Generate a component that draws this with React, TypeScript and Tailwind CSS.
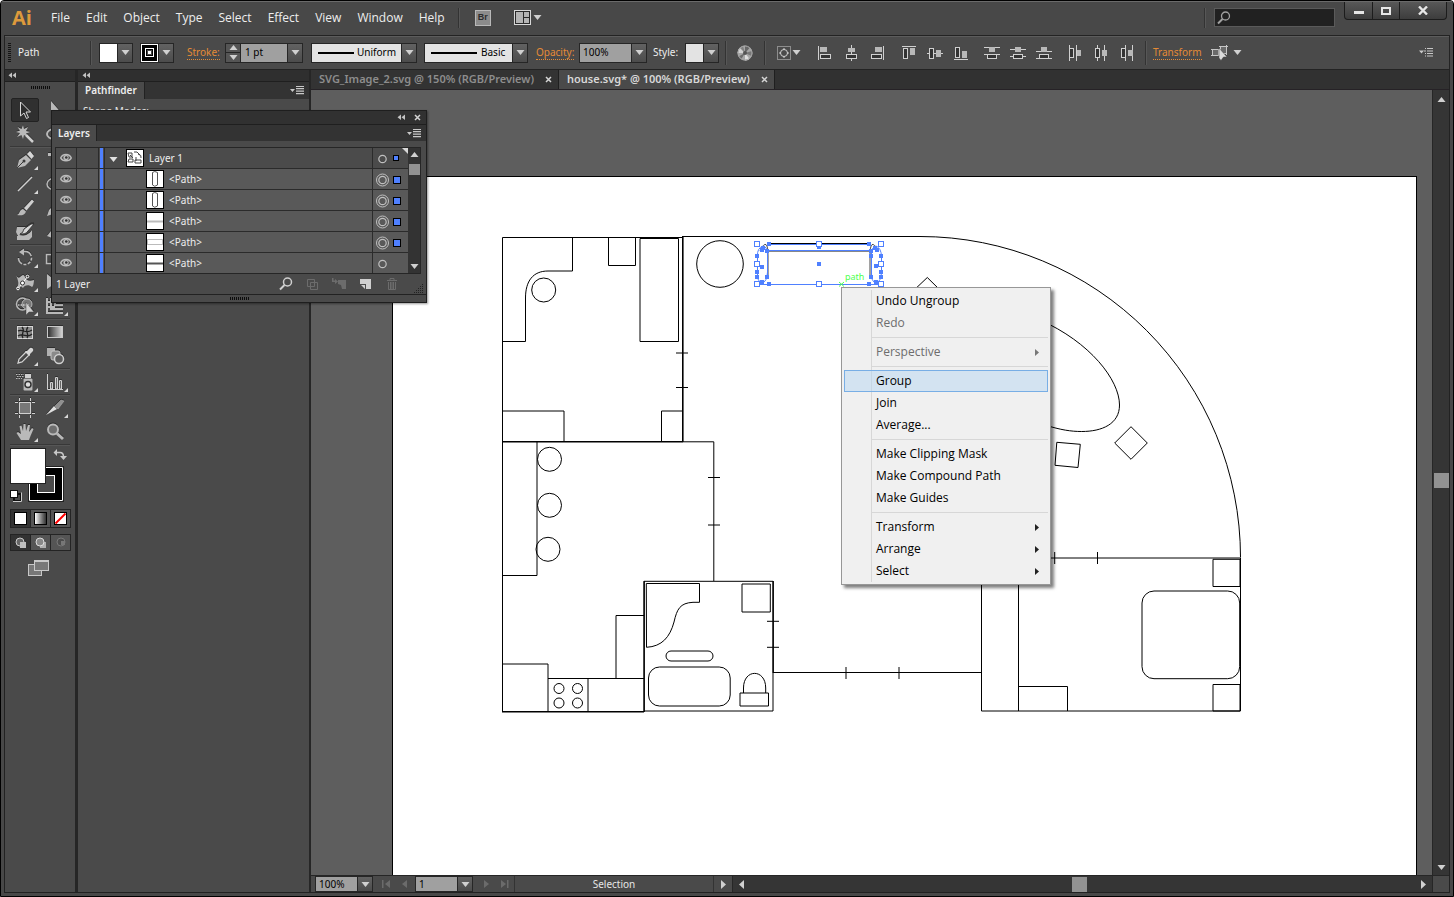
import React from "react";

const FONT = "font-['Noto_Sans',sans-serif]";
const MENU_FONT = "font-['Open_Sans',sans-serif]";

/* ---------- small shared pieces ---------- */

function Tri({ dir = "down", className = "fill-[#d0d0d0]" }: { dir?: "down" | "up" | "left" | "right"; className?: string }) {
  const d = {
    down: "M0.5 2H8.5L4.5 7Z",
    up: "M0.5 7H8.5L4.5 2Z",
    left: "M7 0V9L2 4.5Z",
    right: "M2 0V9L7 4.5Z",
  }[dir];
  return (
    <svg width="9" height="9" viewBox="0 0 9 9" className={`shrink-0 ${className}`}>
      <path d={d} />
    </svg>
  );
}

function VRule({ className = "h-6" }: { className?: string }) {
  return <div className={`w-[2px] shrink-0 border-l border-[#333] bg-[#575757] ${className}`} />;
}

function Grip({ count, vertical = false }: { count: number; vertical?: boolean }) {
  const items = Array.from({ length: count });
  return (
    <div className={vertical ? "flex w-[3px] flex-col gap-px" : "flex h-[3px] gap-px"}>
      {items.map((_, i) => (
        <span key={i} className={vertical ? "h-px w-[3px] bg-[#151515]" : "h-[3px] w-px bg-[#0c0c0c]"} />
      ))}
    </div>
  );
}

function Collapse() {
  return (
    <svg width="8" height="7" viewBox="0 0 8 7" className="fill-[#c4c4c4]">
      <path d="M4 0.5V6L0.5 3.2ZM8 0.5V6L4.5 3.2Z" />
    </svg>
  );
}

function CloseX() {
  return (
    <svg width="7" height="7" viewBox="0 0 7 7" stroke="#d4d4d4" strokeWidth="1.5">
      <path d="M1 1L6 6M6 1L1 6" />
    </svg>
  );
}

function PanelMenu() {
  return (
    <svg width="15" height="9" viewBox="0 0 15 9" fill="#c8c8c8">
      <path d="M0 3H5L2.5 6ZM6 0H14V1H6ZM6 2H14V3.2H6ZM6 4.6H14V5.8H6ZM6 7H14V8.2H6Z" />
    </svg>
  );
}

function DropButton({ label }: { label: string }) {
  return (
    <button aria-label={label} className="flex h-full w-[15px] items-center justify-center border-l border-[#262626] bg-linear-to-b from-[#626262] to-[#4c4c4c]">
      <Tri />
    </button>
  );
}

function Combo({ label, value, options, className, children, field }: { label: string; value: string; options: string[]; className: string; field: string; children?: React.ReactNode }) {
  return (
    <div className={`relative flex border border-[#262626] ${className}`}>
      <select aria-label={label} defaultValue={value} className={`h-full w-full appearance-none text-black outline-none ${field}`}>
        {options.map((o) => (
          <option key={o}>{o}</option>
        ))}
      </select>
      {children}
      <span className="pointer-events-none absolute inset-y-0 right-0 flex w-[15px] items-center justify-center border-l border-[#262626] bg-linear-to-b from-[#626262] to-[#4c4c4c]">
        <Tri />
      </span>
    </div>
  );
}

function OrangeLink({ children }: { children: string }) {
  return (
    <a href="#" className="border-b border-dotted border-[#e58a36] text-[10px] leading-3 text-[#e58a36]">
      {children}
    </a>
  );
}

/* ---------- title bar ---------- */

const MENUS = ["File", "Edit", "Object", "Type", "Select", "Effect", "View", "Window", "Help"];

function TitleBar() {
  return (
    <header className="flex h-[34px] shrink-0 items-center border-t border-[#6a6a6a] bg-[#484848] pb-[2px] pl-[9px]">
      <span className="w-[34px] pl-[2px] font-['Open_Sans',sans-serif] text-[20px] leading-6 font-bold text-[#dd9a3c]">Ai</span>
      <nav className={`flex gap-[2px] ${MENU_FONT} text-[12px] text-[#eeeeee]`}>
        {MENUS.map((m) => (
          <button key={m} className="px-[7px]">
            {m}
          </button>
        ))}
      </nav>
      <VRule className="ml-[6px] h-5" />
      <button className="ml-[15px] flex h-4 w-4 items-center justify-center border border-[#b9b9b9] bg-[#8c8c8c] font-['Liberation_Sans',sans-serif] text-[9px] font-bold text-[#2c2c2c]">Br</button>
      <button aria-label="Arrange documents" className="ml-[23px] flex items-center gap-[2px]">
        <svg width="17" height="15" viewBox="0 0 17 15">
          <rect x="0.5" y="0.5" width="16" height="14" fill="#2a2a2a" stroke="#d8d8d8" />
          <path d="M2 2H9V13H2ZM10 2H15V7H10ZM10 8H15V13H10Z" fill="#b4b4b4" />
        </svg>
        <Tri />
      </button>
      <div className="flex-1" />
      <VRule className="h-5" />
      <label className="ml-2 flex h-[19px] w-[121px] items-center border border-[#5a5a5a] bg-[#212121] px-[2px]">
        <svg width="14" height="14" viewBox="0 0 14 14" fill="none" stroke="#a0a0a0" className="shrink-0">
          <circle cx="8.5" cy="5" r="4" strokeWidth="1.3" />
          <path d="M5.5 8L1 12.5" strokeWidth="2" />
        </svg>
        <input aria-label="Search" className="w-full min-w-0 bg-transparent text-[11px] text-white outline-none" />
      </label>
      <div className="mr-[6px] ml-[9px] flex h-[18px] self-start rounded-b border border-t-0 border-[#1c1c1c] bg-linear-to-b from-[#585858] to-[#3d3d3d]">
        <button aria-label="Minimize" className="flex w-[28px] items-center justify-center border-r border-[#1c1c1c]">
          <span className="mt-1 h-[3px] w-[10px] bg-[#e6e6e6]" />
        </button>
        <button aria-label="Maximize" className="flex w-[27px] items-center justify-center border-r border-[#1c1c1c]">
          <span className="h-2 w-[10px] border-2 border-[#e6e6e6]" />
        </button>
        <button aria-label="Close" className="flex w-[46px] items-center justify-center">
          <svg width="10" height="9" viewBox="0 0 10 9" stroke="#e6e6e6" strokeWidth="2.4">
            <path d="M1 0.5L9 8.5M9 0.5L1 8.5" />
          </svg>
        </button>
      </div>
    </header>
  );
}

/* ---------- control bar ---------- */

const L = "#d0d0d0";
const bar = { fill: "#b8b8b8" };
const box = { fill: "#333", stroke: "#d0d0d0" };

const ALIGN_ICONS: { name: string; gap: string; art: React.ReactNode }[] = [
  { name: "Align left", gap: "", art: <><path d="M1.5 1V15" stroke={L} /><rect x="3" y="2" width="7" height="5" {...bar} /><rect x="3.5" y="9.5" width="10" height="4" {...box} /></> },
  { name: "Align centre", gap: "ml-[10px]", art: <><path d="M8.5 0V16" stroke={L} /><rect x="5" y="3" width="7" height="4" {...bar} /><rect x="3.5" y="9.5" width="10" height="4" {...box} /></> },
  { name: "Align right", gap: "ml-[10px]", art: <><path d="M14.5 1V15" stroke={L} /><rect x="6" y="2" width="7" height="5" {...bar} /><rect x="2.5" y="9.5" width="10" height="4" {...box} /></> },
  { name: "Align top", gap: "ml-4", art: <><path d="M1 1.5H15" stroke={L} /><rect x="2.5" y="3.5" width="4" height="10" {...box} /><rect x="9" y="3" width="5" height="7" {...bar} /></> },
  { name: "Align middle", gap: "ml-[10px]", art: <><path d="M0 8.5H16" stroke={L} /><rect x="2.5" y="3.5" width="4" height="10" {...box} /><rect x="9" y="5" width="5" height="7" {...bar} /></> },
  { name: "Align bottom", gap: "ml-[10px]", art: <><path d="M1 14.5H15" stroke={L} /><rect x="2.5" y="2.5" width="4" height="10" {...box} /><rect x="9" y="6" width="5" height="7" {...bar} /></> },
  { name: "Distribute top", gap: "ml-[15px]", art: <><path d="M0 2.5H16M0 9.5H16" stroke={L} /><rect x="5" y="2" width="6" height="5" {...bar} /><rect x="3.5" y="9.5" width="9" height="4" {...box} /></> },
  { name: "Distribute middle", gap: "ml-[10px]", art: <><path d="M0 4.5H16M0 11.5H16" stroke={L} /><rect x="5" y="2" width="6" height="5" {...bar} /><rect x="3.5" y="9.5" width="9" height="4" {...box} /></> },
  { name: "Distribute bottom", gap: "ml-[10px]", art: <><path d="M0 6.5H16M0 13.5H16" stroke={L} /><rect x="5" y="2" width="6" height="5" {...bar} /><rect x="3.5" y="9.5" width="9" height="4" {...box} /></> },
  { name: "Distribute left", gap: "ml-[15px]", art: <><path d="M2.5 0V16M9.5 0V16" stroke={L} /><rect x="2.5" y="3.5" width="4" height="9" {...box} /><rect x="10" y="5" width="4" height="6" {...bar} /></> },
  { name: "Distribute centre", gap: "ml-[10px]", art: <><path d="M4.5 0V16M11.5 0V16" stroke={L} /><rect x="2.5" y="3.5" width="4" height="9" {...box} /><rect x="9" y="5" width="5" height="6" {...bar} /></> },
  { name: "Distribute right", gap: "ml-[10px]", art: <><path d="M6.5 0V16M13.5 0V16" stroke={L} /><rect x="2.5" y="3.5" width="4" height="9" {...box} /><rect x="9" y="5" width="5" height="6" {...bar} /></> },
];

function ControlBar() {
  return (
    <div className="mx-[3px] flex h-[35px] shrink-0 items-center border border-[#232323] bg-[#4a4a4a] pl-[3px] text-[10px] text-[#eeeeee] shadow-[inset_0_1px_0_#5c5c5c]">
      <Grip count={10} vertical />
      <span className="ml-[7px] w-[72px]">Path</span>
      <VRule />
      <div className="ml-[7px] flex h-5 border border-[#262626]">
        <button aria-label="Fill" className="w-[17px] bg-white" />
        <DropButton label="Fill options" />
      </div>
      <div className="ml-[7px] flex h-5 border border-[#262626]">
        <button aria-label="Stroke colour" className="flex w-[17px] items-center justify-center border border-white bg-black">
          <span className="h-[9px] w-[9px] border border-white bg-black p-px">
            <span className="block h-full w-full border border-[#4a4a4a] bg-white" />
          </span>
        </button>
        <DropButton label="Stroke options" />
      </div>
      <div className="ml-[13px] w-[38px]">
        <OrangeLink>Stroke:</OrangeLink>
      </div>
      <div className="flex h-5 border border-[#262626]">
        <div className="flex w-[14px] flex-col bg-[#555]">
          <button aria-label="Increase stroke" className="flex flex-1 items-center justify-center overflow-hidden border-b border-[#262626]"><Tri dir="up" /></button>
          <button aria-label="Decrease stroke" className="flex flex-1 items-center justify-center overflow-hidden"><Tri /></button>
        </div>
        <input aria-label="Stroke weight" defaultValue="1 pt" className="w-[47px] border-l border-[#262626] bg-[#a0a0a0] pl-1 text-black outline-none" />
        <DropButton label="Stroke weight presets" />
      </div>
      <Combo label="Width profile" value="Uniform" options={["Uniform", "Tapered"]} className="ml-2 h-5 w-[106px]" field="bg-[#e3e3e3] pl-[45px]">
        <span className="pointer-events-none absolute top-2 left-[6px] h-[2px] w-[36px] bg-black" />
      </Combo>
      <Combo label="Brush" value="Basic" options={["Basic", "Charcoal"]} className="ml-[7px] h-5 w-[104px]" field="bg-[#e3e3e3] pl-[56px]">
        <span className="pointer-events-none absolute top-2 left-[6px] h-[2px] w-[46px] bg-black" />
      </Combo>
      <div className="ml-2 w-[43px]">
        <OrangeLink>Opacity:</OrangeLink>
      </div>
      <Combo label="Opacity" value="100%" options={["100%", "75%", "50%"]} className="h-5 w-[68px]" field="bg-[#a0a0a0] pl-[3px]" />
      <span className="ml-[6px] w-8">Style:</span>
      <div className="flex h-5 border border-[#262626]">
        <button aria-label="Graphic style" className="w-[17px] bg-[#e3e3e3]" />
        <DropButton label="Graphic style options" />
      </div>
      <VRule className="ml-[6px] h-6" />
      <button aria-label="Recolor artwork" className="ml-[10px]">
        <svg width="16" height="16" viewBox="0 0 16 16">
          <circle cx="8" cy="8" r="7.5" fill="#a6a6a6" />
          <path d="M8 8L8 0.5A7.5 7.5 0 0 1 13 2.5Z" fill="#666" />
          <path d="M8 8L15 6A7.5 7.5 0 0 1 14.5 11Z" fill="#777" />
          <path d="M8 8L12.5 14A7.5 7.5 0 0 1 8 15.5Z" fill="#dedede" />
          <path d="M8 8L4 14.5A7.5 7.5 0 0 1 1.5 11.5Z" fill="#6c6c6c" />
          <path d="M8 8L0.500 8A7.5 7.5 0 0 1 2.5 3Z" fill="#d2d2d2" />
          <path d="M8 8L3 2.5A7.5 7.5 0 0 1 6 1Z" fill="#808080" />
          <circle cx="8" cy="8" r="7" fill="none" stroke="#a6a6a6" />
          <circle cx="8" cy="8" r="2" fill="#555" />
        </svg>
      </button>
      <VRule className="ml-[11px] h-6" />
      <button aria-label="Align to" className="ml-[11px] flex w-[30px] items-center gap-px">
        <svg width="14" height="14" viewBox="0 0 14 14" fill="none" stroke="#d0d0d0">
          <rect x="0.5" y="0.5" width="13" height="13" strokeDasharray="1 1" />
          <circle cx="7" cy="7" r="3.5" />
          <path d="M7 2V4M7 10V12M2 7H4M10 7H12" />
        </svg>
        <Tri />
      </button>
      <div className="ml-[10px] flex">
        {ALIGN_ICONS.map((a) => (
          <button key={a.name} aria-label={a.name} className={a.gap}>
            <svg width="16" height="16" viewBox="0 0 16 16">{a.art}</svg>
          </button>
        ))}
      </div>
      <VRule className="ml-[10px] h-6" />
      <div className="ml-[6px] w-[58px]">
        <OrangeLink>Transform</OrangeLink>
      </div>
      <button aria-label="Isolate" className="flex items-center gap-[5px]">
        <svg width="17" height="16" viewBox="0 0 17 16">
          <path d="M1.5 4.5H7.5V10.500H1.5ZM9.5 1.5H15.5V8.5H9.5ZM0 4.5H9M0 10.5H8M8 1.5H17M15.500 0V10" fill="#6a6a6a" stroke="#c6c6c6" />
          <path d="M8 3L16 12L12.5 12L10 15.5L8 13Z" fill="#dcdcdc" stroke="#444" strokeWidth="0.5" />
        </svg>
        <Tri />
      </button>
      <div className="flex-1" />
      <button aria-label="Control panel menu" className="mr-4">
        <svg width="14" height="9" viewBox="0 0 14 9" fill="#c8c8c8">
          <path d="M0 2.5H5L2.5 5.5ZM6 0H7V1H6ZM8 0H14V1H8ZM5 2.500H7V3.500H5ZM8 2.500H14V3.500H8ZM6 5H7V6H6ZM8 5H14V6H8ZM6 7.500H7V8.500H6ZM8 7.500H14V8.500H8Z" />
        </svg>
      </button>
    </div>
  );
}

/* ---------- tools ---------- */

const G = "#b9b9b9";

const TOOLS: Record<string, React.ReactNode> = {
  Selection: <path d="M5.5 2V16L9 13L11.5 18.5L13.5 17.5L11 12H15.5Z" fill="#2c2c2c" stroke="#d8d8d8" />,
  "Direct Selection": <path d="M6 1V16L9 13L11.5 18.5L13.5 17.5L11 12H15.5Z" fill={G} />,
  "Magic Wand": <><path d="M8 1L9 5L13 3L11 7L15 8L11 9.5L13 13L9 11L8 15L6.5 11L2 13L5 9L1 8L5 6.5L2.5 3L6.5 5Z" fill={G} /><path d="M11 11L18 18" stroke="#cfcfcf" strokeWidth="2.5" /></>,
  Lasso: <ellipse cx="9" cy="10" rx="7" ry="5" fill="none" stroke={G} strokeWidth="2" />,
  Pen: <><path d="M2 18L4 10L11 5L16 10L10 16Z" fill={G} /><path d="M12 4L15 1L19 6L16.5 9Z" fill="#d6d6d6" /><path d="M2 18L8 12" stroke="#3b3b3b" /><circle cx="9" cy="11" r="1.500" fill="#3b3b3b" /></>,
  Type: <path d="M3 3H17V6H11.5V17H8.5V6H3Z" fill={G} />,
  "Line Segment": <path d="M3 17L17 3" stroke="#d0d0d0" strokeWidth="1.5" />,
  Ellipse: <ellipse cx="10" cy="10" rx="8" ry="6" fill="none" stroke={G} strokeWidth="1.5" />,
  Paintbrush: <><path d="M9 10L17 1.500L19 3.500L11.500 12.500Z" fill="#d0d0d0" /><path d="M2 17C5 16 4 12 8 11L11 13.5C10 17 6 18 2 17Z" fill={G} /></>,
  Pencil: <path d="M2 18L4 12L14 2L18 6L8 16Z" fill={G} />,
  "Blob Brush": <><path d="M2 5H11L9 8C8 11 6 12 4 13C8 14 13 14 17 8V15L14 18H2V14H3L1 10Z" fill={G} /><path d="M9 7L16 2L19 2L13 9C11 12 8 12 5 12C8 11 8 9 9 7Z" fill="#d8d8d8" stroke="#3a3a3a" /></>,
  Eraser: <path d="M2 14L10 4L17 8L10 17Z" fill={G} />,
  Rotate: <><path d="M7 3.5H10A6.500 6.500 0 1 1 3.500 10" fill="none" stroke={G} strokeWidth="1.6" strokeDasharray="11 1.5 3 1.5 3 1.5 3 1.5" /><path d="M4 4L9 0.500V7.500Z" fill={G} /></>,
  Scale: <path d="M1.5 6.5H10.5V15.5H1.5ZM6 1H18V13" fill="none" stroke={G} strokeWidth="1.5" />,
  Width: <><path d="M1 3C4 9 6 3 8 3C11 3 9 11 19 8C19 11 18 15 17 15C14 12 9 13 8 16C5 12 4 16 1 16C5 13 3 8 1 3Z" fill={G} /><path d="M3 17L13 4" stroke="#fff" /><circle cx="3" cy="16.500" r="1.300" fill="#333" stroke="#fff" /><circle cx="12.500" cy="4.500" r="1.300" fill="#333" stroke="#fff" /><circle cx="7.5" cy="11" r="2" fill="#fff" stroke="#333" /></>,
  "Free Transform": <path d="M2 2L12 10L2 17ZM14 4H18V8" fill={G} />,
  "Shape Builder": <><circle cx="7.500" cy="8" r="6" fill="none" stroke={G} strokeWidth="1.5" /><circle cx="12" cy="8" r="5" fill="#777" stroke={G} /><path d="M3 9H14" stroke="#fff" strokeDasharray="1.5 1" /><path d="M11 6V19L14 16H19Z" fill="#cfcfcf" stroke="#444" strokeWidth="0.5" /></>,
  "Perspective Grid": <path d="M2 2V17H18M6 2V13H18M10 2V9H18M14 3V6H18M2 6H6M2 11H10" fill="none" stroke={G} strokeWidth="2" />,
  Mesh: <><rect x="2.5" y="4.5" width="15" height="12" fill="#8d8d8d" stroke="#d6d6d6" /><path d="M3 9C8 6 10 13 17 8M3 14C8 10 12 17 17 12M7 5C11 9 5 12 8 16M13 5C9 9 15 12 12 16" fill="none" stroke="#222" strokeWidth="1.3" /></>,
  Gradient: <><defs><linearGradient id="tool-gradient"><stop stopColor="#2b2b2b" /><stop offset="1" stopColor="#d8d8d8" /></linearGradient></defs><rect x="2.5" y="4.5" width="15" height="11" fill="url(#tool-gradient)" stroke="#c9c9c9" /></>,
  Eyedropper: <><path d="M3 17L4 13L11 6L14 9L7 16Z" fill="none" stroke="#d0d0d0" strokeWidth="1.3" /><path d="M10 5L12 5L15 2C17 1 19 3 18 5L15 8V10Z" fill="#d6d6d6" /></>,
  Blend: <><rect x="2" y="2" width="8" height="8" fill="#b0b0b0" /><rect x="6" y="5" width="9" height="9" rx="2" fill="#8a8a8a" stroke="#c4c4c4" /><circle cx="14" cy="13" r="4.5" fill="#5c5c5c" stroke="#d0d0d0" strokeWidth="1.5" /></>,
  "Symbol Sprayer": <><rect x="8.5" y="6.5" width="9" height="12" rx="1" fill={G} /><rect x="10" y="2" width="6" height="4" fill="#d0d0d0" /><circle cx="13" cy="12.5" r="3" fill="#e0e0e0" stroke="#333" strokeWidth="1.5" /><path d="M1 2.500H9M2 4.500H9M1 6.500H7" stroke={G} strokeDasharray="1.5 1" /></>,
  Graph: <><path d="M2.5 2V17.5H18" fill="none" stroke="#d0d0d0" /><path d="M5.500 10.500H7.5V17H5.500ZM10.500 5.500H12.500V17H10.500ZM14.500 8.500H16.5V17H14.500Z" fill="#666" stroke="#d0d0d0" /></>,
  Artboard: <><rect x="4.5" y="4.5" width="11" height="11" fill="#777" stroke="#d0d0d0" /><path d="M4.5 0V3M15.5 0V3M4.5 17V20M15.5 17V20M0 4.5H3M0 15.5H3M17 4.5H20M17 15.5H20" stroke="#d0d0d0" /></>,
  Slice: <><path d="M1 17L9 8L12 11Z" fill="#e0e0e0" /><path d="M10 8L16 2L19 3L13 11Z" fill="#8f8f8f" stroke={G} strokeWidth="0.5" /></>,
  Hand: <path d="M6 18L1.500 11L3 10L6 12L4.500 4L6.500 3.500L8 9L8.500 2H10.500L11 9L13 3H15L14 10L17 6L18.500 7L15.500 14L14 18Z" fill={G} />,
  Zoom: <><circle cx="8" cy="7.5" r="5" fill="#6e6e6e" stroke={G} strokeWidth="2" /><path d="M12 11.5L18 17" stroke={G} strokeWidth="3" /></>,
};

const TOOL_GROUPS: [string, boolean][][] = [
  [["Selection", false], ["Direct Selection", false], ["Magic Wand", false], ["Lasso", false]],
  [["Pen", true], ["Type", true], ["Line Segment", true], ["Ellipse", true], ["Paintbrush", false], ["Pencil", false], ["Blob Brush", false], ["Eraser", false]],
  [["Rotate", true], ["Scale", true], ["Width", true], ["Free Transform", false], ["Shape Builder", true], ["Perspective Grid", true]],
  [["Mesh", false], ["Gradient", false], ["Eyedropper", true], ["Blend", false]],
  [["Symbol Sprayer", true], ["Graph", true]],
  [["Artboard", false], ["Slice", true], ["Hand", true], ["Zoom", false]],
];

function ToolPanel() {
  return (
    <aside className="flex w-[72px] shrink-0 flex-col border-r-2 border-[#262626] bg-[#4a4a4a]">
      <div className="flex h-3 shrink-0 items-center border-b border-[#1f1f1f] bg-[#2f2f2f] pl-[3px]">
        <Collapse />
      </div>
      <div className="flex h-4 shrink-0 justify-center pt-1">
        <Grip count={10} />
      </div>
      <div className="pl-[5px]">
        {TOOL_GROUPS.map((group, i) => (
          <div key={i}>
            <div className="grid w-[60px] grid-cols-2">
              {group.map(([name, more]) => (
                <button
                  key={name}
                  aria-label={name}
                  className={`relative flex h-6 items-center justify-center ${name === "Selection" ? "mx-px rounded-xs border border-[#222] bg-[#303030]" : ""}`}
                >
                  <svg width="20" height="20" viewBox="0 0 20 20" className="drop-shadow-[0_-1px_0_#2e2e2e]">{TOOLS[name]}</svg>
                  {more && (
                    <svg width="4" height="4" viewBox="0 0 4 4" className="absolute right-[2px] bottom-[2px] fill-[#d8d8d8]">
                      <path d="M4 0V4H0Z" />
                    </svg>
                  )}
                </button>
              ))}
            </div>
            <div className="h-[2px] w-[60px] border-t border-[#383838] bg-[#565656]" />
          </div>
        ))}
      </div>
      <button aria-label="Fill and stroke" className="ml-[4px] w-[60px]">
        <svg width="60" height="58" viewBox="0 0 60 58">
          <rect x="19" y="20" width="36" height="36" fill="#222" />
          <path d="M20.5 21.5H53.5V54.5H20.5Z" fill="#000" stroke="#fff" />
          <rect x="28.5" y="29.5" width="17" height="17" fill="#4a4a4a" stroke="#fff" />
          <rect x="1.5" y="2.5" width="35" height="35" fill="#fff" stroke="#222" />
          <path d="M47 6.5H51C53.500 6.5 54.500 8 54.500 11" fill="none" stroke="#c8c8c8" strokeWidth="1.5" />
          <path d="M48 3V10L44.500 6.500ZM51 10H58L54.500 14Z" fill="#c8c8c8" />
          <rect x="5" y="48" width="7" height="7" fill="#4a4a4a" stroke="#111" strokeWidth="2" />
          <path d="M12.500 46.500V55.500H4" fill="none" stroke="#ccc" />
          <rect x="1.5" y="44.5" width="7" height="7" fill="#fff" stroke="#111" />
        </svg>
      </button>
      <div className="mt-[5px] ml-[5px] flex h-[19px] w-[61px] shrink-0 divide-x divide-[#242424] border border-[#242424] bg-[#555]">
        <button aria-label="Color" className="flex flex-1 items-center justify-center bg-[#333]"><span className="h-[13px] w-[13px] border border-black bg-white" /></button>
        <button aria-label="Gradient fill" className="flex flex-1 items-center justify-center"><span className="h-[13px] w-[13px] border border-black bg-linear-to-r from-white to-[#333]" /></button>
        <button aria-label="None" className="flex flex-1 items-center justify-center">
          <svg width="13" height="13" viewBox="0 0 13 13"><rect x="0.5" y="0.5" width="12" height="12" fill="#fff" stroke="#000" /><path d="M1.5 11.5L11.5 1.5" stroke="#f00" strokeWidth="2" /></svg>
        </button>
      </div>
      <div className="mt-[6px] ml-[5px] flex h-[17px] w-[61px] shrink-0 divide-x divide-[#242424] border border-[#242424] bg-[#555]">
        <button aria-label="Draw normal" className="flex flex-1 items-center justify-center bg-[#333]">
          <svg width="12" height="12" viewBox="0 0 12 12"><circle cx="5" cy="5" r="4" fill="#666" stroke="#ccc" /><rect x="5" y="5" width="6" height="6" fill="#c0c0c0" /></svg>
        </button>
        <button aria-label="Draw behind" className="flex flex-1 items-center justify-center">
          <svg width="12" height="12" viewBox="0 0 12 12"><rect x="5" y="5" width="6" height="6" fill="#b0b0b0" /><circle cx="5" cy="5" r="4" fill="#888" stroke="#ddd" /></svg>
        </button>
        <button aria-label="Draw inside" className="flex flex-1 items-center justify-center">
          <svg width="12" height="12" viewBox="0 0 12 12"><circle cx="6" cy="5" r="4" fill="#4c4c4c" stroke="#777" /><rect x="6" y="4" width="4" height="4" fill="#777" /></svg>
        </button>
      </div>
      <button aria-label="Screen mode" className="mt-2 ml-[22px] w-[22px]">
        <svg width="22" height="18" viewBox="0 0 22 18"><rect x="1.5" y="5.5" width="13" height="11" fill="#777" stroke="#c8c8c8" /><rect x="7.5" y="1.5" width="14" height="10" fill="#777" stroke="#c8c8c8" /><path d="M8 2.500H21" stroke="#c8c8c8" /></svg>
      </button>
    </aside>
  );
}

function PathfinderPanel() {
  return (
    <aside className="flex w-[234px] shrink-0 flex-col border-r-2 border-l border-[#262626] bg-[#4a4a4a]">
      <div className="flex h-3 shrink-0 items-center border-b border-[#1f1f1f] bg-[#2f2f2f] pl-1">
        <Collapse />
      </div>
      <div className="flex h-[17px] shrink-0 items-center justify-between bg-[#333] pr-1">
        <button className="h-full border-r border-[#222] bg-[#4a4a4a] px-[7px] text-[10px] font-semibold text-[#eeeeee]">Pathfinder</button>
        <button aria-label="Pathfinder menu"><PanelMenu /></button>
      </div>
      <h3 className="pt-[5px] pl-[5px] text-[10px] text-[#e6e6e6]">Shape Modes:</h3>
    </aside>
  );
}

/* ---------- layers panel ---------- */

type Row = { name: string; thumb: React.ReactNode; top?: boolean; selected: boolean };

const tall = <path d="M6.500 2.500Q8.500 0.500 11.500 2.500V15Q8.500 17.500 6.500 15Z" fill="none" stroke="#555" />;
const ROWS: Row[] = [
  { name: "Layer 1", top: true, selected: true, thumb: <path d="M2 4H6V8H3ZM8 3H11L14 6M3 10H7V13H2ZM9 11H15V14H9ZM4 6L7 9M12 5Q16 6 15 9M10 8V12" fill="none" stroke="#444" /> },
  { name: "<Path>", selected: true, thumb: tall },
  { name: "<Path>", selected: true, thumb: tall },
  { name: "<Path>", selected: true, thumb: <path d="M1 9.5H17" stroke="#bbb" strokeWidth="2" /> },
  { name: "<Path>", selected: true, thumb: <rect x="1.5" y="6.5" width="15" height="5" fill="none" stroke="#bbb" /> },
  { name: "<Path>", selected: false, thumb: <path d="M1 9.500H17" stroke="#555" strokeWidth="2" /> },
];

function Eye() {
  return (
    <svg width="12" height="9" viewBox="0 0 12 9">
      <path d="M0.7 5C2.5 0.3 9.5 0.3 11.3 5C9.5 8.7 2.5 8.7 0.7 5Z" fill="#505050" stroke="#bcbcbc" strokeWidth="1.4" />
      <circle cx="6" cy="4.5" r="2.6" fill="#bcbcbc" />
      <circle cx="6.300" cy="4.5" r="1.300" fill="#333" />
    </svg>
  );
}

function LayersPanel() {
  return (
    <section className="absolute top-[109px] left-[50px] z-10 flex w-[376px] flex-col border border-[#1e1e1e] bg-[#4a4a4a] text-[10px] text-[#eeeeee] shadow-[1px_1px_2px_rgba(0,0,0,0.4)]">
      <div className="flex h-[13px] items-center justify-end gap-[9px] bg-[#313131] pr-[5px]">
        <button aria-label="Collapse layers"><Collapse /></button>
        <button aria-label="Close layers"><CloseX /></button>
      </div>
      <div className="flex h-[17px] items-center justify-between border-t border-[#1f1f1f] bg-[#333] pr-1">
        <button className="h-full border-r border-[#222] bg-[#4a4a4a] px-[6px] font-semibold">Layers</button>
        <button aria-label="Layers menu"><PanelMenu /></button>
      </div>
      <div className="mr-[5px] ml-[3px] mt-[6px] flex border border-[#262626] bg-[#2b2b2b]">
        <div className="flex flex-1 flex-col gap-px">
          {ROWS.map((r, i) => (
            <div key={i} className={`flex h-5 gap-px ${r.top ? "[&>*]:bg-[#4b4b4b]" : "[&>*]:bg-[#595959]"}`}>
              <button aria-label="Toggle visibility" className="flex w-5 justify-center pt-[5px]"><Eye /></button>
              <div className="w-[21px]" />
              <div className="w-[5px] px-px"><div className="h-full bg-[#4f80ff]" /></div>
              <div className="flex flex-1 items-center">
                {r.top && <span className="pt-[2px] pl-1"><Tri className="fill-[#e0e0e0]" /></span>}
                <svg width="18" height="18" viewBox="0 0 18 18" className={r.top ? "ml-2" : "ml-[41px]"}>
                  <rect x="0.5" y="0.5" width="17" height="17" fill="#fff" stroke="#000" />
                  {r.thumb}
                </svg>
                <span className="ml-[5px]">{r.name}</span>
              </div>
              <div className="relative flex w-[35px] items-center">
                <svg width="35" height="20" viewBox="0 0 35 20">
                  <circle cx="9.5" cy="11" r="3.700" fill="none" stroke="#c0c0c0" strokeWidth="1.2" />
                  {r.selected && !r.top && <circle cx="9.5" cy="11" r="6" fill="none" stroke="#c0c0c0" />}
                  {r.selected && (r.top ? <rect x="20.5" y="7.5" width="5" height="5" fill="#4f80ff" stroke="#000" /> : <rect x="20.5" y="7.5" width="7" height="7" fill="#4f80ff" stroke="#000" />)}
                  {r.top && <path d="M29 0H35V6Z" fill="#d8d8d8" />}
                </svg>
              </div>
            </div>
          ))}
        </div>
        <div className="flex w-3 flex-col items-center bg-[#333] py-[2px]">
          <Tri dir="up" />
          <div className="mt-[5px] h-[11px] w-[11px] bg-[#929292]" />
          <div className="flex-1" />
          <Tri />
        </div>
      </div>
      <div className="flex h-5 items-center pr-[2px] pl-1">
        <span className="flex-1">1 Layer</span>
        <div className="flex items-center gap-[13px]">
          <button aria-label="Locate object"><svg width="14" height="14" viewBox="0 0 14 14" fill="none" stroke="#d0d0d0"><circle cx="8.5" cy="5" r="4" strokeWidth="1.5" /><path d="M5.5 8L1 12.5" strokeWidth="2" /></svg></button>
          <button aria-label="Clipping mask"><svg width="13" height="12" viewBox="0 0 13 12" fill="none" stroke="#6c6c6c"><path d="M1.5 1.5H8.5V8.5H1.5ZM4.5 4.5H11.5V11.5H4.5Z" /></svg></button>
          <button aria-label="New sublayer"><svg width="15" height="12" viewBox="0 0 15 12" fill="#6c6c6c"><path d="M0 0H1.5V2.5H3V1L6 3.5L3 6V4H0ZM6 2H14V11H10L9 7L6 6Z" /></svg></button>
          <button aria-label="New layer"><svg width="11" height="12" viewBox="0 0 11 12" fill="#cfcfcf"><path d="M0 1H11V11H6V6H0ZM1 7H5V11Z" /></svg></button>
          <button aria-label="Delete layer" className="ml-[2px]"><svg width="12" height="12" viewBox="0 0 12 12" fill="none" stroke="#6c6c6c"><path d="M1 2.500H11M4 2V0.500H8V2M2.500 4V11.500H9.500V4M4.500 4V11M6 4V11M7.500 4V11" /></svg></button>
          <svg width="10" height="10" viewBox="0 0 10 10" className="mt-2 ml-[3px]" stroke="#222" strokeDasharray="1 1"><path d="M8 1.500H10M6 3.500H10M4 5.500H10M2 7.500H10M0 9.500H10" /></svg>
        </div>
      </div>
      <div className="flex h-2 items-center justify-center border-t border-[#222]">
        <Grip count={10} />
      </div>
    </section>
  );
}

/* ---------- artwork ---------- */

const HOLLOW = [[757, 244], [819, 244], [881, 244], [757, 264], [881, 264], [757, 284], [819, 284], [881, 284]];
const SOLID = [
  [769, 244], [869, 244], [819, 247], [819, 264], [767, 251], [871, 251], [763, 248], [875, 248], [762, 250], [877, 250],
  [757, 256], [871, 256], [881, 256], [762, 267], [876, 266], [757, 272], [881, 272], [757, 277], [767, 277], [871, 277], [881, 277],
  [762, 282], [876, 282], [769, 284], [869, 284],
];

function Artwork() {
  return (
    <svg className="h-full w-full">
      <g transform="translate(-311 -90)" fill="none" stroke="#000" strokeWidth="1">
        <rect x="392.5" y="176.5" width="1024" height="768" fill="#fff" />
        {/* bedroom, top left */}
        <path d="M502.5 712V237.5H682M640 238.5H678.5V341.5H640ZM608.5 237.5H635.5V265.5H608.5ZM503 411H564V442M661.5 442V411H682M676 353H688M676 387.5H688" />
        <path d="M572.5 237.5V271H548C533 271 525.5 281 525.5 298V341.5H503" />
        <path d="M682.8 236V442" strokeWidth="1.6" />
        <path d="M502 441.7H683" strokeWidth="1.4" />
        <circle cx="543.7" cy="290" r="12" />
        {/* main hall */}
        <path d="M683 236.5H920A320.5 321 0 0 1 1240.5 557.5" />
        <circle cx="720" cy="264" r="23.3" />
        <path d="M683 441.8H713.8V581M708 477.5H720M708 525H720M773 672.5H981.5M846 667V679M899 667V679" />
        {/* kitchen */}
        <path d="M537 442V575.5H503M503 664H548V712M548 678.5H644M588 678.5V712M616 678.5V615.5H644" />
        <path d="M502 711.7H644" strokeWidth="1.5" />
        <circle cx="549.5" cy="459.3" r="12" />
        <circle cx="549.5" cy="505.3" r="12" />
        <circle cx="548" cy="549.3" r="12" />
        <circle cx="559" cy="688.5" r="5" />
        <circle cx="577.5" cy="688.5" r="5" />
        <circle cx="559" cy="703" r="5" />
        <circle cx="577.5" cy="703" r="5" />
        {/* bathroom */}
        <path d="M644 581.3H773V711H644ZM742 584H770.3V612H742ZM740 693H768.5V706H740ZM767 621.3H779M767 647.3H779" />
        <path d="M644.2 581V712M773.2 581V673" strokeWidth="1.3" />
        <path d="M646.3 583.5H699.5V602.3H693C680 603 677 609 674 622C670 637 662 646.5 646.5 647.3Z" />
        <path d="M743.5 693V688C743.5 668.5 765.7 668.5 765.7 688V693" />
        <rect x="666" y="651" width="47" height="10" rx="5" />
        <rect x="648.5" y="667" width="81.7" height="39" rx="11" />
        {/* bedroom, bottom right */}
        <path d="M981.5 558H1240.5V711H981.5ZM1018.5 558V711M1018.5 686.5H1067.5V711M1054.7 552V564M1097.5 552V564" />
        <path d="M1213 559.3H1240V586.5H1213ZM1213 684.5H1240V711H1213Z" />
        <rect x="1142" y="591" width="97.7" height="87.7" rx="12" />
        {/* dining table and chairs */}
        <path d="M1040 320C1090 342 1119.5 380 1119.5 405C1119.5 424 1102 431.5 1081.7 431.5C1071 431.5 1061 430 1045 425" />
        <path d="M1131 426.7L1147.3 443L1131 459.3L1114.7 443ZM1056.8 442.3L1080.3 444.3L1078 467.5L1055 465.3ZM927.3 277.5L943 293L927 309L911 293Z" />
        {/* selected sofa */}
        <path d="M760 250.5Q768 236 768 256V278M878 250.5Q870 236 870 256V278" stroke="#444" />
        <g stroke="#4f80ff">
          <path d="M757 284.5H881M768 244.5H870M767 250.5H871M767.5 250V277M871.5 250V277" />
          <path d="M757.5 256Q757 248 763 246Q768 247 767.5 256V272Q767 282 762 283Q757 282 757.5 272ZM871.5 256Q871 247 876 246Q881 248 881.5 256V272Q881 282 876 283Q871 282 871.5 272Z" />
        </g>
        <path d="M768 243.5H870" />
        <path d="M768 251.5H870" stroke="#888" />
        {SOLID.map(([x, y]) => (
          <rect key={`${x}-${y}`} x={x - 2} y={y - 2} width="4" height="4" fill="#4f80ff" stroke="none" />
        ))}
        {HOLLOW.map(([x, y]) => (
          <rect key={`${x}-${y}`} x={x - 2.5} y={y - 2.5} width="5" height="5" fill="#fff" stroke="#4f80ff" />
        ))}
        <path d="M839 282L844 286.5M844 282L839 286.5" stroke="#4fff4f" />
        <text x="845" y="280" fill="#4fff4f" stroke="none" className="font-['Noto_Sans',sans-serif] text-[9px]">path</text>
      </g>
    </svg>
  );
}

/* ---------- context menu ---------- */

type Item = { label: string; disabled?: boolean; sub?: boolean; active?: boolean };

const CONTEXT: Item[][] = [
  [{ label: "Undo Ungroup" }, { label: "Redo", disabled: true }],
  [{ label: "Perspective", disabled: true, sub: true }],
  [{ label: "Group", active: true }, { label: "Join" }, { label: "Average..." }],
  [{ label: "Make Clipping Mask" }, { label: "Make Compound Path" }, { label: "Make Guides" }],
  [{ label: "Transform", sub: true }, { label: "Arrange", sub: true }, { label: "Select", sub: true }],
];

function ContextMenu() {
  return (
    <div role="menu" className={`absolute top-[197px] left-[530px] w-[210px] border border-[#979797] bg-[#f0f0f0] p-[2px] ${MENU_FONT} text-[12px] text-black shadow-[3px_3px_3px_rgba(0,0,0,0.5)]`}>
      <div className="bg-[linear-gradient(#d7d7d7,#d7d7d7)] bg-[length:1px_100%] bg-[position:27px_0] bg-no-repeat">
        {CONTEXT.map((group, i) => (
          <div key={i}>
            {i > 0 && <div className="ml-7 flex h-[7px] items-center"><div className="h-px w-full bg-[#d7d7d7]" /></div>}
            {group.map((item) => (
              <button
                key={item.label}
                role="menuitem"
                disabled={item.disabled}
                className={`flex h-[22px] w-full items-center justify-between border pr-[5px] pl-[31px] text-left ${item.active ? "border-[#78aee5] bg-[#b5d5f2]/50" : "border-transparent"} ${item.disabled ? "text-[#6d6d6d]" : ""}`}
              >
                {item.label}
                {item.sub && (
                  <svg width="9" height="7" viewBox="0 0 9 7" className={item.disabled ? "fill-[#777]" : "fill-[#222]"}>
                    <path d="M2 0L6 3.5L2 7Z" />
                  </svg>
                )}
              </button>
            ))}
          </div>
        ))}
      </div>
    </div>
  );
}

/* ---------- document ---------- */

function Tab({ title, active }: { title: string; active?: boolean }) {
  return (
    <div className={`flex items-center border-r border-[#1f1f1f] pr-[6px] pl-2 ${active ? "bg-[#4a4a4a] text-[#d8d8d8]" : "bg-[#333] text-[#8d8d8d]"}`}>
      <button className="mr-[11px] font-semibold">{title}</button>
      <button aria-label="Close tab"><CloseX /></button>
    </div>
  );
}

function NavIcon({ label, d }: { label: string; d: string }) {
  return (
    <button aria-label={label} className="flex w-[19px] items-center justify-center">
      <svg width="9" height="8" viewBox="0 0 9 8" className="fill-[#6b6b6b]"><path d={d} /></svg>
    </button>
  );
}

function DocumentArea() {
  return (
    <main className="flex min-w-0 flex-1 flex-col">
      <div className="flex h-5 shrink-0 border-b border-[#262226] bg-[#313131] text-[11px]">
        <Tab title="SVG_Image_2.svg @ 150% (RGB/Preview)" />
        <Tab title="house.svg* @ 100% (RGB/Preview)" active />
      </div>
      <div className="flex min-h-0 flex-1">
        <div className="relative min-w-0 flex-1 overflow-hidden bg-[#5e5e5e]">
          <Artwork />
          <ContextMenu />
        </div>
        <div className="flex w-[17px] flex-col items-center border-l border-[#262626] bg-[#353535] pt-[5px] pb-[3px]">
          <Tri dir="up" />
          <div className="flex-[60]" />
          <div className="h-[15px] w-[15px] bg-[#929292]" />
          <div className="flex-[61]" />
          <Tri />
        </div>
      </div>
      <footer className="flex h-[17px] shrink-0 border-t border-[#262626] bg-[#4a4a4a] text-[10px] text-[#e6e6e6]">
        <Combo label="Zoom level" value="100%" options={["100%", "150%"]} className="ml-1 w-[58px]" field="bg-[#a0a0a0] pl-[3px]" />
        <div className="ml-1 flex">
          <NavIcon label="First artboard" d="M0 0H1.5V8H0ZM8 0V8L3 4Z" />
          <NavIcon label="Previous artboard" d="M6 0V8L1 4Z" />
        </div>
        <Combo label="Artboard number" value="1" options={["1"]} className="w-[58px]" field="bg-[#a0a0a0] pl-[3px]" />
        <div className="ml-[3px] flex">
          <NavIcon label="Next artboard" d="M3 0V8L8 4Z" />
          <NavIcon label="Last artboard" d="M1 0V8L6 4ZM7 0H8.5V8H7Z" />
        </div>
        <div className="flex w-[199px] items-center justify-center border-l border-[#333]">Selection</div>
        <button aria-label="Status options" className="flex w-[19px] items-center justify-center border-l border-[#333]"><Tri dir="right" /></button>
        <div className="flex flex-1 items-center border-l border-[#262626] bg-[#353535] px-1">
          <Tri dir="left" />
          <div className="flex-[60]" />
          <div className="h-[15px] w-[15px] bg-[#929292]" />
          <div className="flex-[61]" />
          <Tri dir="right" />
        </div>
        <div className="w-[17px] border-l border-[#262626]" />
      </footer>
    </main>
  );
}

export default function App() {
  return (
    <div className={`relative flex h-screen flex-col overflow-hidden rounded-t border border-black bg-[#484848] ${FONT}`}>
      <TitleBar />
      <ControlBar />
      <div className="mx-[3px] mb-[3px] flex min-h-0 flex-1 border border-t-0 border-[#222]">
        <ToolPanel />
        <PathfinderPanel />
        <DocumentArea />
      </div>
      <LayersPanel />
    </div>
  );
}
